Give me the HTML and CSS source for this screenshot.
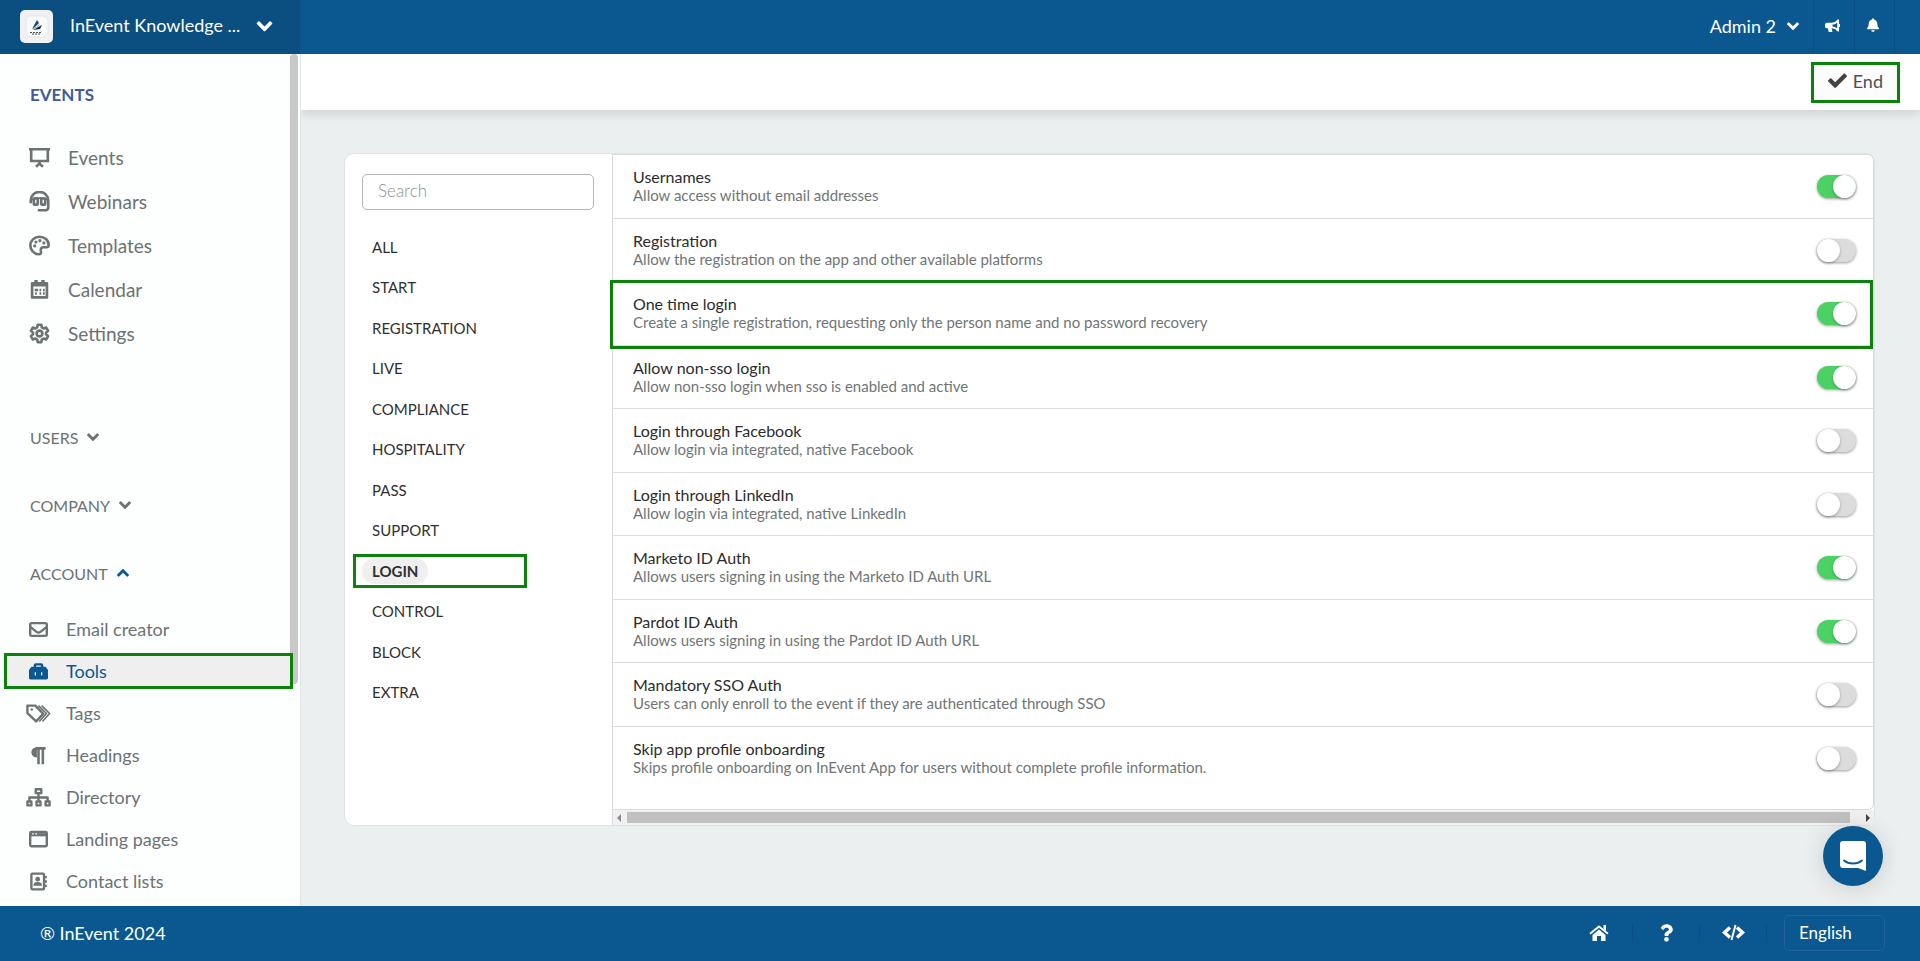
FILE: index.html
```html
<!DOCTYPE html>
<html lang="en">
<head>
<meta charset="utf-8">
<title>InEvent - Tools</title>
<link rel="stylesheet" href="styles.css">
</head>
<body>
<svg class="sprite" aria-hidden="true">
  <symbol id="chevron" viewBox="0 0 448 512"><path d="M207 381 13 187c-9-9-9-25 0-34l22-22c10-10 25-10 34 0l155 154 155-154c9-10 24-10 34 0l22 22c10 9 10 25 0 34L241 381c-9 10-25 10-34 0z"/></symbol>
  <symbol id="chevron-bold" viewBox="0 0 448 512"><path d="M202 395 8 201c-9-9-9-25 0-34l40-40c10-10 25-10 34 0l142 141 142-141c9-10 24-10 34 0l40 40c10 9 10 25 0 34L246 395c-13 12-31 12-44 0z"/></symbol>
</svg>
<header class="topbar">
  <button class="company" type="button">
    <svg class="logo" viewBox="0 0 33 33"><rect width="33" height="33" rx="5" fill="#eff1f2"/><rect x="6" y="6" width="22" height="21" rx="5" fill="#f8f9f9" stroke="#e6e8e9"/><path d="m12 19 5-9 2 3-4 4z" fill="#1e4964"/><path d="m13 20 9-5-2 4z" fill="#17222d"/><path d="M13 18.500c2 0 5-2 6-4" stroke="#5fa9cf" fill="none"/><path d="M10 22.500h12M12 24h9" stroke="#46525a" stroke-dasharray="2 1" fill="none"/></svg>
    <span class="company-name">InEvent Knowledge ...</span>
    <svg class="ic-company"><use href="#chevron-bold"/></svg>
  </button>
  <div class="top-actions">
    <button class="admin" type="button">Admin 2 <svg class="ic-small"><use href="#chevron-bold"/></svg></button>
    <button class="top-icon" type="button" aria-label="Announcements"><svg width="15" height="15" viewBox="0 0 16 16" fill="none" stroke="#fff" stroke-width="2"><path fill="#fff" stroke="none" d="M2 5h6v6H7l1 4H4L3 11H2C1 11 0 10 0 9V7c0-1 1-2 2-2z"/><path d="M7.500 6C10 6 12.500 4.500 14 2.500v11C12.500 11.500 10 10 7.500 10" stroke-linejoin="round"/><path d="M15 6.500v3"/></svg></button>
    <button class="top-icon" type="button" aria-label="Notifications"><svg width="12" height="14" viewBox="0 0 448 512" fill="#fff"><path d="M224 512c35 0 64-29 64-64H160c0 35 29 64 64 64zm215-150c-19-21-55-52-55-154 0-78-54-140-128-155V32c0-18-14-32-32-32s-32 14-32 32v21C118 68 64 130 64 208c0 102-36 133-55 154-6 7-9 14-9 22 0 16 13 32 32 32h384c19 0 32-16 32-32 0-8-3-15-9-22z"/></svg></button>
  </div>
</header>

<div class="body">
  <aside class="sidebar">
    <nav>
      <h2 class="nav-title">EVENTS</h2>
      <ul class="menu">
        <li><a href="#"><svg viewBox="0 0 24 24"><path d="M0 2.500h24M2.500 3v13h19V3M12 16v3M8 22.500l4-3.500 4 3.500"/></svg>Events</a></li>
        <li><a href="#"><svg viewBox="0 0 24 24"><path d="M2 14v-3a10 10 0 0 1 20 0v7c0 2-1 4-3 4h-9"/><path d="M2.500 13.500v-3L6 8h12l3.500 2.500" stroke-width="2"/><rect x="5.500" y="8.500" width="4.500" height="7" rx="1"/><rect x="14" y="8.500" width="4.500" height="7" rx="1"/></svg>Webinars</a></li>
        <li><a href="#"><svg viewBox="0 0 24 24"><path d="M12 2C6 2 1.500 6.500 1.500 12s4.500 10 9.500 10c3 0 3-2 2.500-4-.5-2.500 1-4 3-4H20c1.500 0 2.500-1 2.500-2.500C22.500 6 17.500 2 12 2z"/><g fill="currentColor" stroke="none"><circle cx="6.500" cy="12.500" r="1.800"/><circle cx="8" cy="8" r="1.800"/><circle cx="12.500" cy="6.500" r="1.800"/><circle cx="17" cy="9" r="1.800"/></g></svg>Templates</a></li>
        <li><a href="#"><svg viewBox="0 0 24 24"><path d="M3.500 5h17v16h-17z" stroke-linejoin="round"/><path d="M2.500 6.500h19M8 1v5M16 1v5" stroke-width="4"/><path d="M6.500 12.500h4M12 12.500h2M16 12.500h2M7 16.500h2M12 16.500h2M16 16.500h2"/></svg>Calendar</a></li>
        <li><a href="#"><svg viewBox="0 0 24 24"><path stroke-linejoin="round" d="m10 2-.7 3-2 1.200-3-1L2.200 9l2.300 2v2l-2.300 2 2.100 3.800 3-1 2 1.200.7 3h4l.7-3 2-1.200 3 1 2.100-3.800-2.300-2v-2l2.300-2-2.100-3.800-3 1-2-1.200L14 2z"/><circle cx="12" cy="12" r="3.300"/></svg>Settings</a></li>
      </ul>
      <button class="group" type="button">USERS <svg><use href="#chevron-bold"/></svg></button>
      <button class="group" type="button">COMPANY <svg><use href="#chevron-bold"/></svg></button>
      <button class="group open" type="button">ACCOUNT <svg><use href="#chevron-bold"/></svg></button>
      <ul class="menu sub">
        <li><a href="#"><svg viewBox="0 0 24 24"><rect x="1.500" y="4" width="21" height="16" rx="2"/><path d="m2 9 7.500 6c1.500 1 3.500 1 5 0L22 9"/></svg>Email creator</a></li>
        <li><a class="current" href="#"><svg viewBox="0 0 24 24"><path fill="currentColor" stroke="none" d="M6 6V4c0-1.500 1-2.500 2.500-2.500h7C17 1.500 18 2.500 18 4v2h3l3 4v10c0 1.500-.5 2-2 2H2c-1.500 0-2-.5-2-2V10l3-4zm3 0h6V4.500H9z"/><path d="M8 13v4M16 13v4" stroke="#efeff0" stroke-width="1.500"/></svg>Tools</a></li>
        <li><a href="#"><svg viewBox="2 0 24 24" overflow="visible"><path stroke-linejoin="round" d="M0 2v9.500L11 22l9-9.500L10 2z"/><path d="m14 2 10 10-9 10M18 2l10 10-9 10" stroke-width="2"/><circle cx="5.500" cy="7" r="1.500" fill="currentColor" stroke="none"/></svg>Tags</a></li>
        <li><a href="#"><svg viewBox="0 0 24 24"><path fill="currentColor" stroke="none" d="M10 1.500C5.500 1.500 3 4.500 3 8s2.500 6.500 7 6.500V5h1z"/><path d="M21 3H9M12 3v20M17.500 3v20" stroke-width="3.200"/></svg>Headings</a></li>
        <li><a href="#"><svg viewBox="2 0 24 24" overflow="visible"><path d="M10.500 1.500h7v5h-7zM0 17h5v5H0zM11.500 17h5v5h-5zM23 17h5v5h-5zM14 7v10M2.500 17v-5h23v5" stroke-linejoin="round"/></svg>Directory</a></li>
        <li><a href="#"><svg viewBox="0 0 24 24"><rect x="1.500" y="2.500" width="21" height="18" rx="1.500"/><path d="M1.500 6h21" stroke-width="4"/><path d="M4 5h2M8 5h2" stroke="#fff" stroke-width="1.500"/></svg>Landing pages</a></li>
        <li><a href="#"><svg viewBox="0 0 24 24"><rect x="3" y="2" width="16" height="20" rx="1.500"/><path d="M21 5v3M21 10.500v3M21 16v3"/><circle cx="11" cy="9" r="3" fill="currentColor" stroke="none"/><path fill="currentColor" stroke="none" d="M5.500 17.500c0-3 1.500-5 5.500-5s5.500 2 5.500 5z"/></svg>Contact lists</a></li>
      </ul>
    </nav>
    <div class="side-thumb"></div>
  </aside>

  <main class="main">
    <div class="toolbar">
      <button class="end" type="button"><svg width="19" height="19" viewBox="0 0 512 512" fill="#444"><path d="M170 446 7 283c-10-10-10-26 0-36l47-46c10-10 26-10 36 0l102 102L422 73c10-10 26-10 36 0l47 46c10 10 10 26 0 36L214 446c-12 12-32 12-44 0z"/></svg>End</button>
    </div>
    <div class="content">
      <section class="card">
        <div class="filters">
          <input class="search" type="search" placeholder="Search" aria-label="Search">
          <ul class="tabs">
            <li><a href="#">ALL</a></li>
            <li><a href="#">START</a></li>
            <li><a href="#">REGISTRATION</a></li>
            <li><a href="#">LIVE</a></li>
            <li><a href="#">COMPLIANCE</a></li>
            <li><a href="#">HOSPITALITY</a></li>
            <li><a href="#">PASS</a></li>
            <li><a href="#">SUPPORT</a></li>
            <li class="marked"><a class="selected" href="#">LOGIN</a></li>
            <li><a href="#">CONTROL</a></li>
            <li><a href="#">BLOCK</a></li>
            <li><a href="#">EXTRA</a></li>
          </ul>
        </div>
        <div class="settings">
          <div class="rows">
            <label class="row"><span class="text"><span class="name">Usernames</span><span class="desc">Allow access without email addresses</span></span><input class="switch" type="checkbox" checked></label>
            <label class="row"><span class="text"><span class="name">Registration</span><span class="desc">Allow the registration on the app and other available platforms</span></span><input class="switch" type="checkbox"></label>
            <label class="row marked"><span class="text"><span class="name">One time login</span><span class="desc">Create a single registration, requesting only the person name and no password recovery</span></span><input class="switch" type="checkbox" checked></label>
            <label class="row"><span class="text"><span class="name">Allow non-sso login</span><span class="desc">Allow non-sso login when sso is enabled and active</span></span><input class="switch" type="checkbox" checked></label>
            <label class="row"><span class="text"><span class="name">Login through Facebook</span><span class="desc">Allow login via integrated, native Facebook</span></span><input class="switch" type="checkbox"></label>
            <label class="row"><span class="text"><span class="name">Login through LinkedIn</span><span class="desc">Allow login via integrated, native LinkedIn</span></span><input class="switch" type="checkbox"></label>
            <label class="row"><span class="text"><span class="name">Marketo ID Auth</span><span class="desc">Allows users signing in using the Marketo ID Auth URL</span></span><input class="switch" type="checkbox" checked></label>
            <label class="row"><span class="text"><span class="name">Pardot ID Auth</span><span class="desc">Allows users signing in using the Pardot ID Auth URL</span></span><input class="switch" type="checkbox" checked></label>
            <label class="row"><span class="text"><span class="name">Mandatory SSO Auth</span><span class="desc">Users can only enroll to the event if they are authenticated through SSO</span></span><input class="switch" type="checkbox"></label>
            <label class="row"><span class="text"><span class="name">Skip app profile onboarding</span><span class="desc">Skips profile onboarding on InEvent App for users without complete profile information.</span></span><input class="switch" type="checkbox"></label>
          </div>
          <div class="hscroll" aria-hidden="true"><span class="arrow left"></span><span class="thumb"></span><span class="arrow right"></span></div>
        </div>
      </section>
    </div>
  </main>
</div>

<footer class="footer">
  <span>® InEvent 2024</span>
  <div class="foot-links">
    <a href="#" aria-label="Home"><svg width="20" height="18" viewBox="0 0 20 18"><path fill="#fff" d="m10 5.500 6.500 5.500v6H12v-5H8v5H3.500v-6z"/><path d="M1 9.800 10 2.500l9 7.300" fill="none" stroke="#fff" stroke-width="1.800"/><path fill="#fff" d="M14.500 1H17v6l-2.500-2z"/></svg></a>
    <a href="#" aria-label="Help"><svg width="13" height="18" viewBox="0 0 384 512" fill="#fff"><path d="M202 0C122 0 71 33 30 91c-7 11-5 25 5 33l43 33c10 8 25 6 33-4 26-32 44-50 83-50 31 0 69 20 69 50 0 22-19 34-49 51-35 20-82 44-82 106v10c0 13 10 24 24 24h72c13 0 24-11 24-24v-6c0-43 126-44 126-160C378 66 287 0 202 0zm-10 373a69 69 0 1 0 0 139 69 69 0 0 0 0-139z"/></svg></a>
    <a href="#" aria-label="Developers"><svg width="23" height="17" viewBox="0 0 23 17" fill="none" stroke="#fff" stroke-width="3.500"><path d="M8 3.500 2.500 8.500 8 13.500M15 3.500l5.500 5L15 13.500"/><path d="m13.500 1-4 15" stroke-width="2"/></svg></a>
    <select class="lang" aria-label="Language"><option>English</option></select>
  </div>
</footer>
<button class="chat" type="button" aria-label="Open chat"><svg width="28" height="31" viewBox="0 0 28 31"><path fill="#fff" d="M4 0h20c2 0 3 1 3 3v27l-8-3H4c-2 0-3-1-3-3V3c0-2 1-3 3-3z"/><path d="M5 19.500c5 4 13 4 18 0" fill="none" stroke="#0b5890" stroke-width="1.800" stroke-linecap="round"/></svg></button>
</body>
</html>
```
FILE: styles.css
```css
* { box-sizing: border-box; }
body {
  margin: 0;
  height: 100vh;
  display: flex;
  flex-direction: column;
  font-family: Lato, "Liberation Sans", sans-serif;
  font-size: 18px;
  color: #6c7372;
  background: #ebeff0;
}
button { font: inherit; color: inherit; background: none; border: 0; padding: 0; cursor: pointer; }
a { color: inherit; text-decoration: none; }
ul { list-style: none; margin: 0; padding: 0; }
.sprite { display: none; }

.topbar {
  flex: none;
  height: 54px;
  display: flex;
  justify-content: space-between;
  background: #0b5890;
  color: #fff;
}
.company {
  width: 300px;
  padding: 0 20px 2px;
  display: flex;
  align-items: center;
  background: #0b4e80;
}
.logo { width: 33px; height: 33px; }
.company-name { margin-left: 17px; padding-bottom: 2px; }
.ic-company { width: 17px; height: 18px; margin-left: 16px; fill: #fff; }
.top-actions { display: flex; padding-right: 25px; }
.admin { display: flex; align-items: center; gap: 11px; padding: 0 14px 3px 0; }
.ic-small { width: 12px; height: 14px; fill: #fff; }
.top-icon {
  width: 41px;
  padding: 0 4px 4px 0;
  display: flex;
  align-items: center;
  justify-content: center;
  border-left: 1px solid #0a4f83;
}
.top-icon:last-child { border-right: 1px solid #0a4f83; }

.body { flex: 1; min-height: 0; display: flex; }
.sidebar {
  position: relative;
  flex: none;
  width: 301px;
  overflow: hidden;
  background: #fdfefe;
  border-right: 1px solid #e0e3e4;
}
.nav-title { margin: 30px 0 29px 30px; font-size: 17px; line-height: 22px; color: #44599a; }
.menu { display: grid; }
.menu a {
  height: 44px;
  padding-left: 28px;
  display: flex;
  align-items: center;
  gap: 17px;
  font-size: 19px;
}
.menu svg { width: 23px; height: 21px; fill: none; stroke: currentColor; stroke-width: 3; }
.sub { row-gap: 6px; position: relative; z-index: 1; }
.sub a {
  height: 36px;
  margin: 0 7px 0 4px;
  padding-left: 23px;
  gap: 16px;
  border: 3px solid transparent;
  border-left-width: 0;
  font-size: 18px;
}
.sub svg { height: 19px; }
.sub .current {
  color: #0b5890;
  background: #efeff0;
  border: 3px solid #0c820c;
  padding-left: 20px;
}
.group {
  display: flex;
  align-items: center;
  gap: 9px;
  height: 20px;
  margin: 0 0 48px 30px;
  font-size: 16px;
}
.menu + .group { margin-top: 72px; }
.group svg { width: 12px; height: 14px; fill: currentColor; }
.group.open { margin-bottom: 28px; }
.open svg { transform: rotate(180deg); fill: #0b5890; }
.side-thumb {
  position: absolute;
  top: 0;
  right: 2px;
  width: 8px;
  height: 74%;
  border-radius: 4px;
  background: #c8c8c8;
}

.main { flex: 1; min-width: 0; display: flex; flex-direction: column; }
.toolbar {
  flex: none;
  height: 56px;
  padding: 8px 20px 0 0;
  display: flex;
  justify-content: flex-end;
  align-items: flex-start;
  background: #fff;
  box-shadow: 0 4px 10px rgba(0, 0, 0, .12);
}
.end {
  display: flex;
  align-items: center;
  gap: 6px;
  height: 41px;
  padding: 0 14px 4px;
  border: 3px solid #0c820c;
  background: #fcfcfc;
  color: #505050;
}
.content { flex: 1; min-height: 0; padding: 43px 45px 80px 43px; }
.card { height: 100%; display: flex; border: 1px solid #dfe3e4; border-radius: 10px; background: #fff; }
.filters { flex: none; width: 268px; padding: 20px 18px 0 17px; border-right: 1px solid #d9dcdf; }
.search {
  display: block;
  width: 100%;
  height: 36px;
  padding: 0 15px 4px;
  border: 1px solid #b4b6b8;
  border-radius: 5px;
  font: 300 17px/24px Lato, sans-serif;
  background: #fff;
}
.search::placeholder { color: #8a8f91; opacity: 1; }
.tabs { margin: 20px 0 0; color: #303030; font-size: 15px; }
.tabs li { height: 34px; display: flex; align-items: center; margin: 0 0 6px -9px; border: 3px solid transparent; padding-left: 6px; }
.tabs li:nth-child(even) { margin-bottom: 7px; }
.tabs a { padding: 0 10px; line-height: 26px; border-radius: 13px; }
.tabs .selected { background: #efeff0; font-weight: 700; }
.tabs .marked { width: 174px; border-color: #0c820c; }

.settings { flex: 1; min-width: 0; display: flex; flex-direction: column; }
.rows { flex: 1; min-height: 0; border: 1px solid #d9dcdf; border-width: 1px 1px 1px 0; border-radius: 0 6px 6px 0; }
.row {
  position: relative;
  height: 64px;
  display: flex;
  justify-content: space-between;
  align-items: flex-start;
  padding: 13px 17px 0 20px;
  border-bottom: 1px solid #d9dcdf;
}
.row:nth-child(even) { height: 63px; }
.row:last-child { border-bottom: 0; }
.row.marked::after {
  content: "";
  position: absolute;
  inset: -2px 0 -4px -3px;
  border: 3px solid #0c820c;
}
.text { display: flex; flex-direction: column; line-height: 18px; }
.name { font-size: 16px; color: #2c2c2c; }
.desc { font-size: 15px; color: #707675; }
.switch {
  appearance: none;
  width: 39px;
  height: 23px;
  margin: 7px 0 0;
  display: flex;
  border-radius: 12px;
  background: #dcdcdc;
  box-shadow: 0 1px 3px rgba(0, 0, 0, .4);
}
.switch::before {
  content: "";
  width: 23px;
  height: 23px;
  border-radius: 50%;
  background: #fff;
  box-shadow: 0 1px 3px rgba(0, 0, 0, .3);
}
.switch:checked { background: #4cd264; justify-content: flex-end; }
.hscroll { flex: none; height: 15px; display: flex; align-items: center; background: #f1f1f1; padding: 0 4px; gap: 6px; }
.thumb { flex: 1; height: 11px; margin-right: 10px; background: #c1c1c1; }
.arrow { border: 4px solid transparent; }
.arrow.left { border-left-width: 0; border-right-color: #8a8a8a; }
.arrow.right { border-right-width: 0; border-left-color: #444; }

.footer {
  flex: none;
  height: 55px;
  padding: 0 35px 2px 40px;
  display: flex;
  align-items: center;
  justify-content: space-between;
  background: #0b5890;
  color: #fff;
}
.foot-links { display: flex; align-items: center; }
.foot-links a {
  width: 67px;
  height: 18px;
  display: flex;
  align-items: center;
  justify-content: center;
  border-right: 1px solid #0a4f83;
}
.lang {
  appearance: none;
  width: 101px;
  height: 36px;
  margin-left: 17px;
  padding: 0 14px;
  border: 1px solid #206399;
  border-radius: 5px;
  background: transparent;
  color: #fff;
  font: 17px Lato, sans-serif;
}
.chat {
  position: fixed;
  right: 37px;
  bottom: 75px;
  width: 60px;
  height: 60px;
  display: grid;
  place-items: center;
  border-radius: 50%;
  background: #0b5890;
  box-shadow: 0 2px 24px rgba(0, 0, 0, .14);
}
```
